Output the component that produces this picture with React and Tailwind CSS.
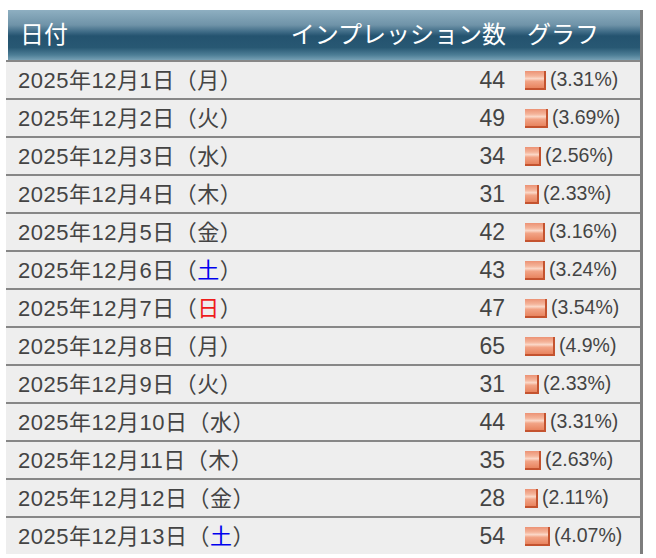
const rows = [
  { d: "2025年12月1日", w: "月", n: 44, p: "3.31" },
  { d: "2025年12月2日", w: "火", n: 49, p: "3.69" },
  { d: "2025年12月3日", w: "水", n: 34, p: "2.56" },
  { d: "2025年12月4日", w: "木", n: 31, p: "2.33" },
  { d: "2025年12月5日", w: "金", n: 42, p: "3.16" },
  { d: "2025年12月6日", w: "土", n: 43, p: "3.24" },
  { d: "2025年12月7日", w: "日", n: 47, p: "3.54" },
  { d: "2025年12月8日", w: "月", n: 65, p: "4.9" },
  { d: "2025年12月9日", w: "火", n: 31, p: "2.33" },
  { d: "2025年12月10日", w: "水", n: 44, p: "3.31" },
  { d: "2025年12月11日", w: "木", n: 35, p: "2.63" },
  { d: "2025年12月12日", w: "金", n: 28, p: "2.11" },
  { d: "2025年12月13日", w: "土", n: 54, p: "4.07" },
];

const font = { fontFamily: '"Liberation Sans", "Noto Sans CJK JP", sans-serif' };

function Weekday({ w }) {
  const color = w === "土" ? "text-[#0000ee]" : w === "日" ? "text-[#ee1c1c]" : "";
  return (
    <span>
      （<span className={color}>{w}</span>）
    </span>
  );
}

export default function App() {
  return (
    <div className="bg-white min-h-screen pt-[10px] pl-[6px]" style={font}>
      <div className="w-[637px] border-r-[3px] border-[#7d7d7d]">
        {/* header */}
        <div className="ml-[2px] h-[50px] flex items-center text-white text-[24px] bg-[linear-gradient(to_bottom,#8eafc1_0%,#6f93a8_30%,#3d6a85_44%,#24536f_52%,#285873_75%,#4d7e96_90%,#76a0b4_100%)]">
          <div className="flex-1 pl-[12px]">日付</div>
          <div className="pr-[21px] text-right">インプレッション数</div>
          <div className="w-[113px]">グラフ</div>
        </div>
        {/* body */}
        {rows.map((r, i) => {
          const bw = Math.round(parseFloat(r.p) * 6.2);
          return (
            <div
              key={i}
              className="border-t-2 border-[#878787] h-[38px] bg-[#eeeeee] flex items-center text-[#444444]"
            >
              <div className="flex-1 pl-[12px] text-[22px] tracking-[0.5px] whitespace-nowrap">
                {r.d}
                <Weekday w={r.w} />
              </div>
              <div className="pr-[20px] text-right text-[23px]">{r.n}</div>
              <div className="w-[115px] flex items-center gap-[4px]">
                <div
                  className="h-[19px] border-r-2 border-b-2 border-[#c4532f] bg-[linear-gradient(to_bottom,#ec9274_0%,#f4b49a_30%,#fbd8c8_45%,#f2a486_60%,#e8845f_100%)]"
                  style={{ width: bw }}
                />
                <span className="text-[19.5px]">({r.p}%)</span>
              </div>
            </div>
          );
        })}
      </div>
    </div>
  );
}
